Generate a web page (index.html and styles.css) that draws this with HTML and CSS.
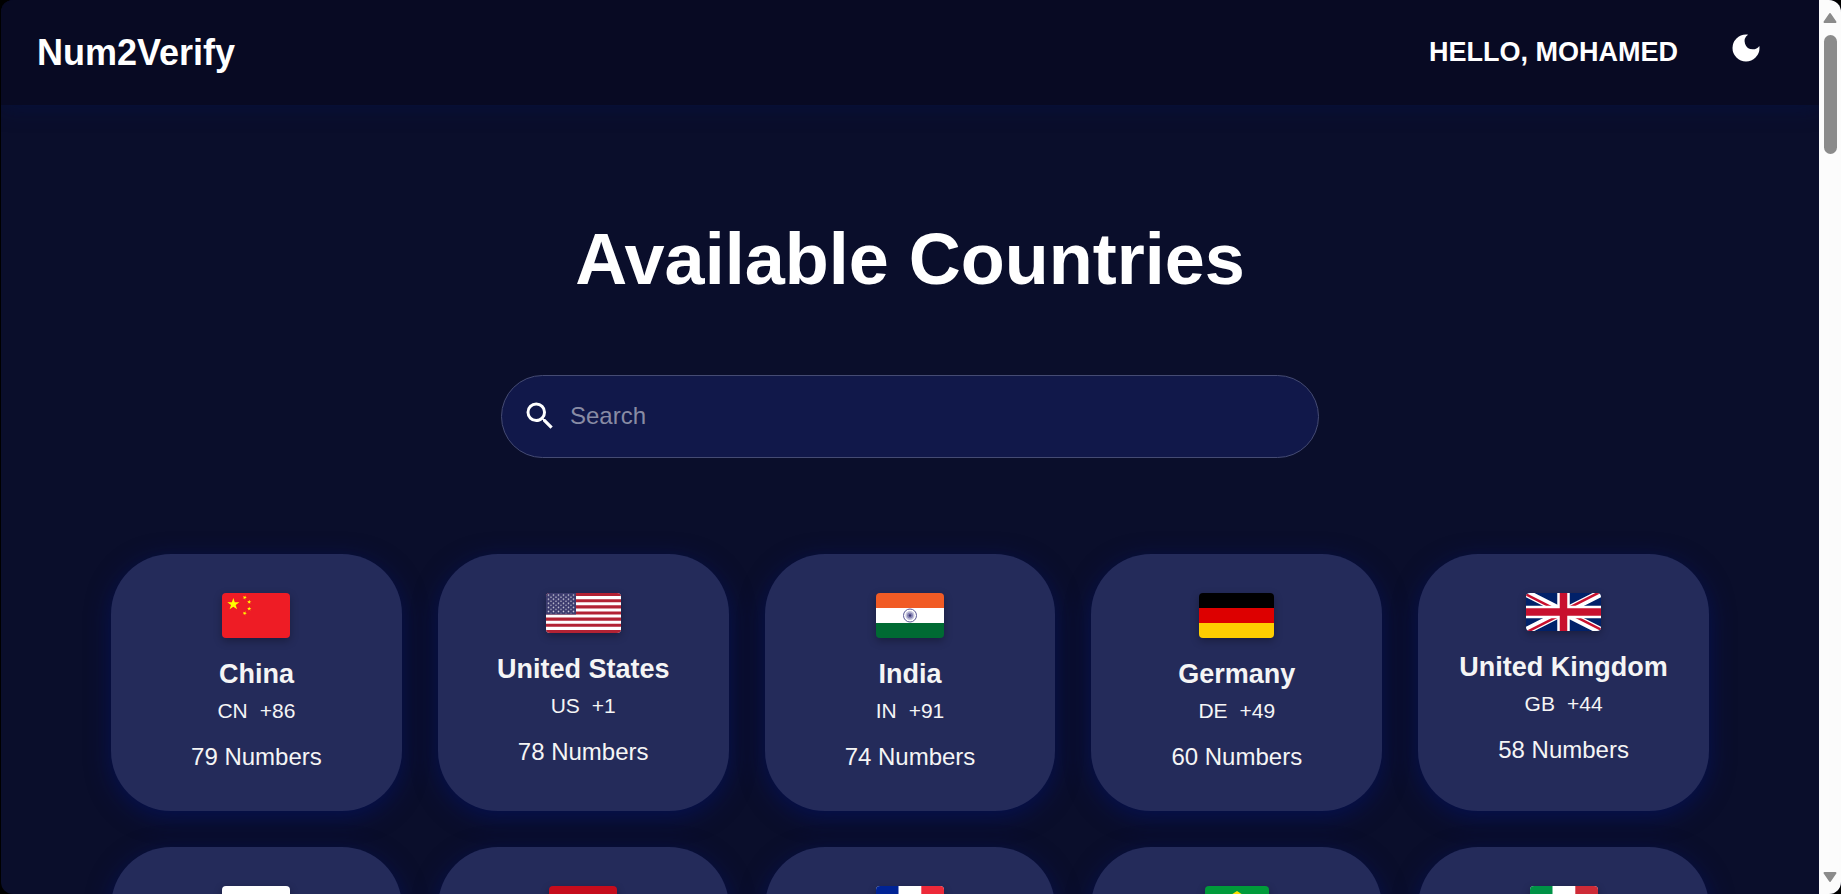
FILE: index.html
```html
<!DOCTYPE html>
<html lang="en">
<head>
<meta charset="utf-8">
<title>Num2Verify</title>
<link rel="stylesheet" href="styles.css">
</head>
<body>
<div class="window">
  <div class="page">
    <header class="topbar">
      <div class="brand">Num2Verify</div>
      <div class="account">
        <span class="greeting">HELLO, MOHAMED</span>
        <button class="theme-toggle" type="button" aria-label="Toggle dark mode">
          <svg viewBox="0 0 24 24" fill="currentColor"><path d="M12 3a9 9 0 1 0 9 9c0-.46-.04-.92-.1-1.36a5.389 5.389 0 0 1-4.4 2.26 5.403 5.403 0 0 1-3.14-9.8c-.44-.06-.9-.1-1.36-.1z"/></svg>
        </button>
      </div>
    </header>
    <main class="content">
      <h1 class="title">Available Countries</h1>
      <label class="search">
        <svg viewBox="0 0 24 24" fill="currentColor" aria-hidden="true"><path d="M15.5 14h-.79l-.28-.27A6.471 6.471 0 0 0 16 9.5 6.5 6.5 0 1 0 9.5 16c1.61 0 3.09-.59 4.23-1.57l.27.28v.79l5 4.99L20.49 19l-4.99-5zm-6 0C7.01 14 5 11.99 5 9.5S7.01 5 9.5 5 14 7.01 14 9.5 11.99 14 9.5 14z"/></svg>
        <input type="search" placeholder="Search" aria-label="Search">
      </label>
      <section class="countries">
        <article class="card">
          <svg class="flag" width="68" height="45" viewBox="0 0 30 20" preserveAspectRatio="none">
            <defs><path id="star" d="M0-1 .225-.309H.951L.363.118.588.809 0 .382-.588.809-.363.118-.951-.309H-.225z"/></defs>
            <path fill="#ee1c25" d="M0 0h30v20H0z"/>
            <g fill="#ff0"><use href="#star" transform="translate(5 5) scale(2.8)"/><use href="#star" transform="translate(10 2) rotate(24) scale(1)"/><use href="#star" transform="translate(12 4) rotate(8) scale(1)"/><use href="#star" transform="translate(12 7) scale(1)"/><use href="#star" transform="translate(10 9) rotate(24) scale(1)"/></g>
          </svg>
          <h2 class="name">China</h2>
          <p class="code"><span>CN</span><span>+86</span></p>
          <p class="count">79 Numbers</p>
        </article>
        <article class="card">
          <svg class="flag" width="75" height="40" viewBox="0 0 75 39" preserveAspectRatio="none">
            <defs><pattern id="stars" width="5" height="4" patternUnits="userSpaceOnUse"><circle cx="2.5" cy="2" r=".8"/><circle cx="0" cy="4" r=".7"/><circle cx="5" cy="4" r=".7"/><circle cx="0" cy="0" r=".7"/><circle cx="5" cy="0" r=".7"/></pattern></defs>
            <path fill="#fff" d="M0 0h75v39H0z"/>
            <path fill="#b22234" d="M0 0h75v3H0zM0 6h75v3H0zM0 12h75v3H0zM0 18h75v3H0zM0 24h75v3H0zM0 30h75v3H0zM0 36h75v3H0z"/>
            <path fill="#3c3b6e" d="M0 0h30v21H0z"/>
            <path fill="url(#stars)" class="star-field" d="M1 1h28v19H1z"/>
          </svg>
          <h2 class="name">United States</h2>
          <p class="code"><span>US</span><span>+1</span></p>
          <p class="count">78 Numbers</p>
        </article>
        <article class="card">
          <svg class="flag" width="68" height="45" viewBox="0 0 68 45">
            <path fill="#f15b25" d="M0 0h68v15H0z"/><path fill="#fff" d="M0 15h68v15H0z"/><path fill="#006a33" d="M0 30h68v15H0z"/>
            <circle cx="34" cy="22.500" r="6.500" fill="none" stroke="#5a5996"/>
            <circle cx="34" cy="22.500" r="4.500" fill="#c3c2da"/><circle cx="34" cy="22.500" r="3" fill="#8886b5"/><circle cx="34" cy="22.500" r="1.300" fill="#3b3878"/>
          </svg>
          <h2 class="name">India</h2>
          <p class="code"><span>IN</span><span>+91</span></p>
          <p class="count">74 Numbers</p>
        </article>
        <article class="card">
          <svg class="flag" width="75" height="45" viewBox="0 0 75 45">
            <path d="M0 0h75v15H0z"/><path fill="#d00" d="M0 15h75v15H0z"/><path fill="#ffce00" d="M0 30h75v15H0z"/>
          </svg>
          <h2 class="name">Germany</h2>
          <p class="code"><span>DE</span><span>+49</span></p>
          <p class="count">60 Numbers</p>
        </article>
        <article class="card">
          <svg class="flag" width="75" height="38" viewBox="0 0 60 30" preserveAspectRatio="none">
            <defs><clipPath id="saltire"><path d="M30 15h30v15zv15H0zH0V0zV0h30z"/></clipPath></defs>
            <path fill="#012169" d="M0 0h60v30H0z"/>
            <path d="M0 0l60 30M60 0L0 30" stroke="#fff" stroke-width="6"/>
            <path d="M0 0l60 30M60 0L0 30" stroke="#c8102e" stroke-width="4" clip-path="url(#saltire)"/>
            <path d="M30 0v30M0 15h60" stroke="#fff" stroke-width="10"/>
            <path d="M30 0v30M0 15h60" stroke="#c8102e" stroke-width="6"/>
          </svg>
          <h2 class="name">United Kingdom</h2>
          <p class="code"><span>GB</span><span>+44</span></p>
          <p class="count">58 Numbers</p>
        </article>
        <article class="card">
          <svg class="flag" width="68" height="45" viewBox="0 0 68 45"><path fill="#fff" d="M0 0h68v15H0z"/><path fill="#0039a6" d="M0 15h68v15H0z"/><path fill="#d52b1e" d="M0 30h68v15H0z"/></svg>
        </article>
        <article class="card">
          <svg class="flag" width="68" height="45" viewBox="0 0 68 45"><path fill="#c60c1c" d="M0 0h68v23H0z"/><path fill="#fff" d="M0 23h68v22H0z"/></svg>
        </article>
        <article class="card">
          <svg class="flag" width="68" height="45" viewBox="0 0 68 45"><path fill="#fff" d="M0 0h68v45H0z"/><path fill="#002395" d="M0 0h22.500v45H0z"/><path fill="#ed2939" d="M45.300 0H68v45H45.300z"/></svg>
        </article>
        <article class="card">
          <svg class="flag" width="64" height="45" viewBox="0 0 64 45"><path fill="#009b3a" d="M0 0h64v45H0z"/><path fill="#fedf00" d="M32 5l27 17.500L32 40 5 22.500z"/><circle cx="32" cy="22.500" r="10" fill="#002776"/></svg>
        </article>
        <article class="card">
          <svg class="flag" width="68" height="45" viewBox="0 0 68 45"><path fill="#fff" d="M0 0h68v45H0z"/><path fill="#009246" d="M0 0h22.500v45H0z"/><path fill="#ce2b37" d="M45.300 0H68v45H45.300z"/></svg>
        </article>
      </section>
    </main>
  </div>
  <div class="scrollbar" aria-hidden="true">
    <svg class="arrow" viewBox="0 0 14 11"><path d="M7 1.500L12.500 9.500H1.500z"/></svg>
    <div class="thumb"></div>
    <svg class="arrow" viewBox="0 0 14 11"><path d="M7 9.500L12.500 1.500H1.500z"/></svg>
  </div>
</div>
</body>
</html>
```
FILE: styles.css
```css
* {
  box-sizing: border-box;
}

body {
  margin: 0;
  background: #000;
  color: #fff;
  font-family: "Liberation Sans", Arial, sans-serif;
}

h1, h2, p {
  margin: 0;
}

.window {
  display: flex;
  height: 100vh;
  margin-left: 1px;
  border-radius: 12px;
  overflow: hidden;
  background: #0a0e2b;
}

.page {
  flex: 1;
  min-width: 0;
  overflow: hidden;
}

.topbar {
  position: relative;
  display: flex;
  align-items: center;
  justify-content: space-between;
  height: 105px;
  padding: 0 55px 0 36px;
  background: #080a23;
  box-shadow: 0 4px 20px rgba(0, 20, 80, 0.4);
}

.brand {
  font-size: 36px;
  font-weight: 700;
}

.account {
  display: flex;
  align-items: center;
  gap: 50px;
}

.greeting {
  font-size: 27px;
  font-weight: 700;
}

.theme-toggle {
  display: flex;
  padding: 0 0 10px;
  border: 0;
  background: none;
  color: #fff;
}

.theme-toggle svg {
  width: 36px;
  height: 36px;
}

.content {
  display: flex;
  flex-direction: column;
  align-items: center;
  padding: 112px 110px 0;
}

.title {
  font-size: 72px;
  line-height: 84px;
}

.search {
  display: flex;
  align-items: center;
  gap: 12px;
  width: 818px;
  max-width: 100%;
  height: 83px;
  margin-top: 74px;
  padding: 0 20px 2px;
  border: 1px solid #454b73;
  border-radius: 42px;
  background: #11184a;
}

.search svg {
  flex: none;
  width: 36px;
  height: 36px;
}

.search input {
  flex: 1;
  min-width: 0;
  padding: 0;
  border: 0;
  outline: 0;
  background: none;
  color: #fff;
  font: 24px "Liberation Sans", Arial, sans-serif;
}

.search input::placeholder {
  color: #888ba4;
}

.countries {
  display: grid;
  grid-template-columns: repeat(5, minmax(0, 1fr));
  grid-auto-rows: 1fr;
  gap: 36px;
  width: 100%;
  margin-top: 96px;
}

.card {
  display: flex;
  flex-direction: column;
  align-items: center;
  padding: 39px 20px 40px;
  border-radius: 60px;
  background: #242b5a;
  box-shadow: 0 6px 24px rgba(0, 20, 120, 0.5);
  color: #f5f5f5;
}

.flag {
  flex: none;
  border-radius: 4px;
  box-shadow: 0 3px 8px rgba(0, 0, 0, 0.3);
}

.star-field {
  opacity: 0.75;
}

#stars {
  fill: #fff;
}

.name {
  margin-top: 21px;
  font-size: 27px;
  line-height: 31px;
  white-space: nowrap;
}

.code {
  display: flex;
  gap: 12px;
  margin-top: 9px;
  font-size: 21px;
  line-height: 24px;
}

.count {
  margin-top: 20px;
  font-size: 24px;
  line-height: 28px;
}

.scrollbar {
  display: flex;
  flex-direction: column;
  align-items: center;
  width: 22px;
  padding: 12px 0 11px;
  background: #fcfcfc;
}

.arrow {
  width: 14px;
  height: 12px;
  fill: #8b8b8b;
  stroke: #8b8b8b;
  stroke-width: 2;
  stroke-linejoin: round;
}

.thumb {
  width: 13px;
  height: 119px;
  margin: 11px 0 auto;
  border-radius: 7px;
  background: #8b8b8b;
}
```
